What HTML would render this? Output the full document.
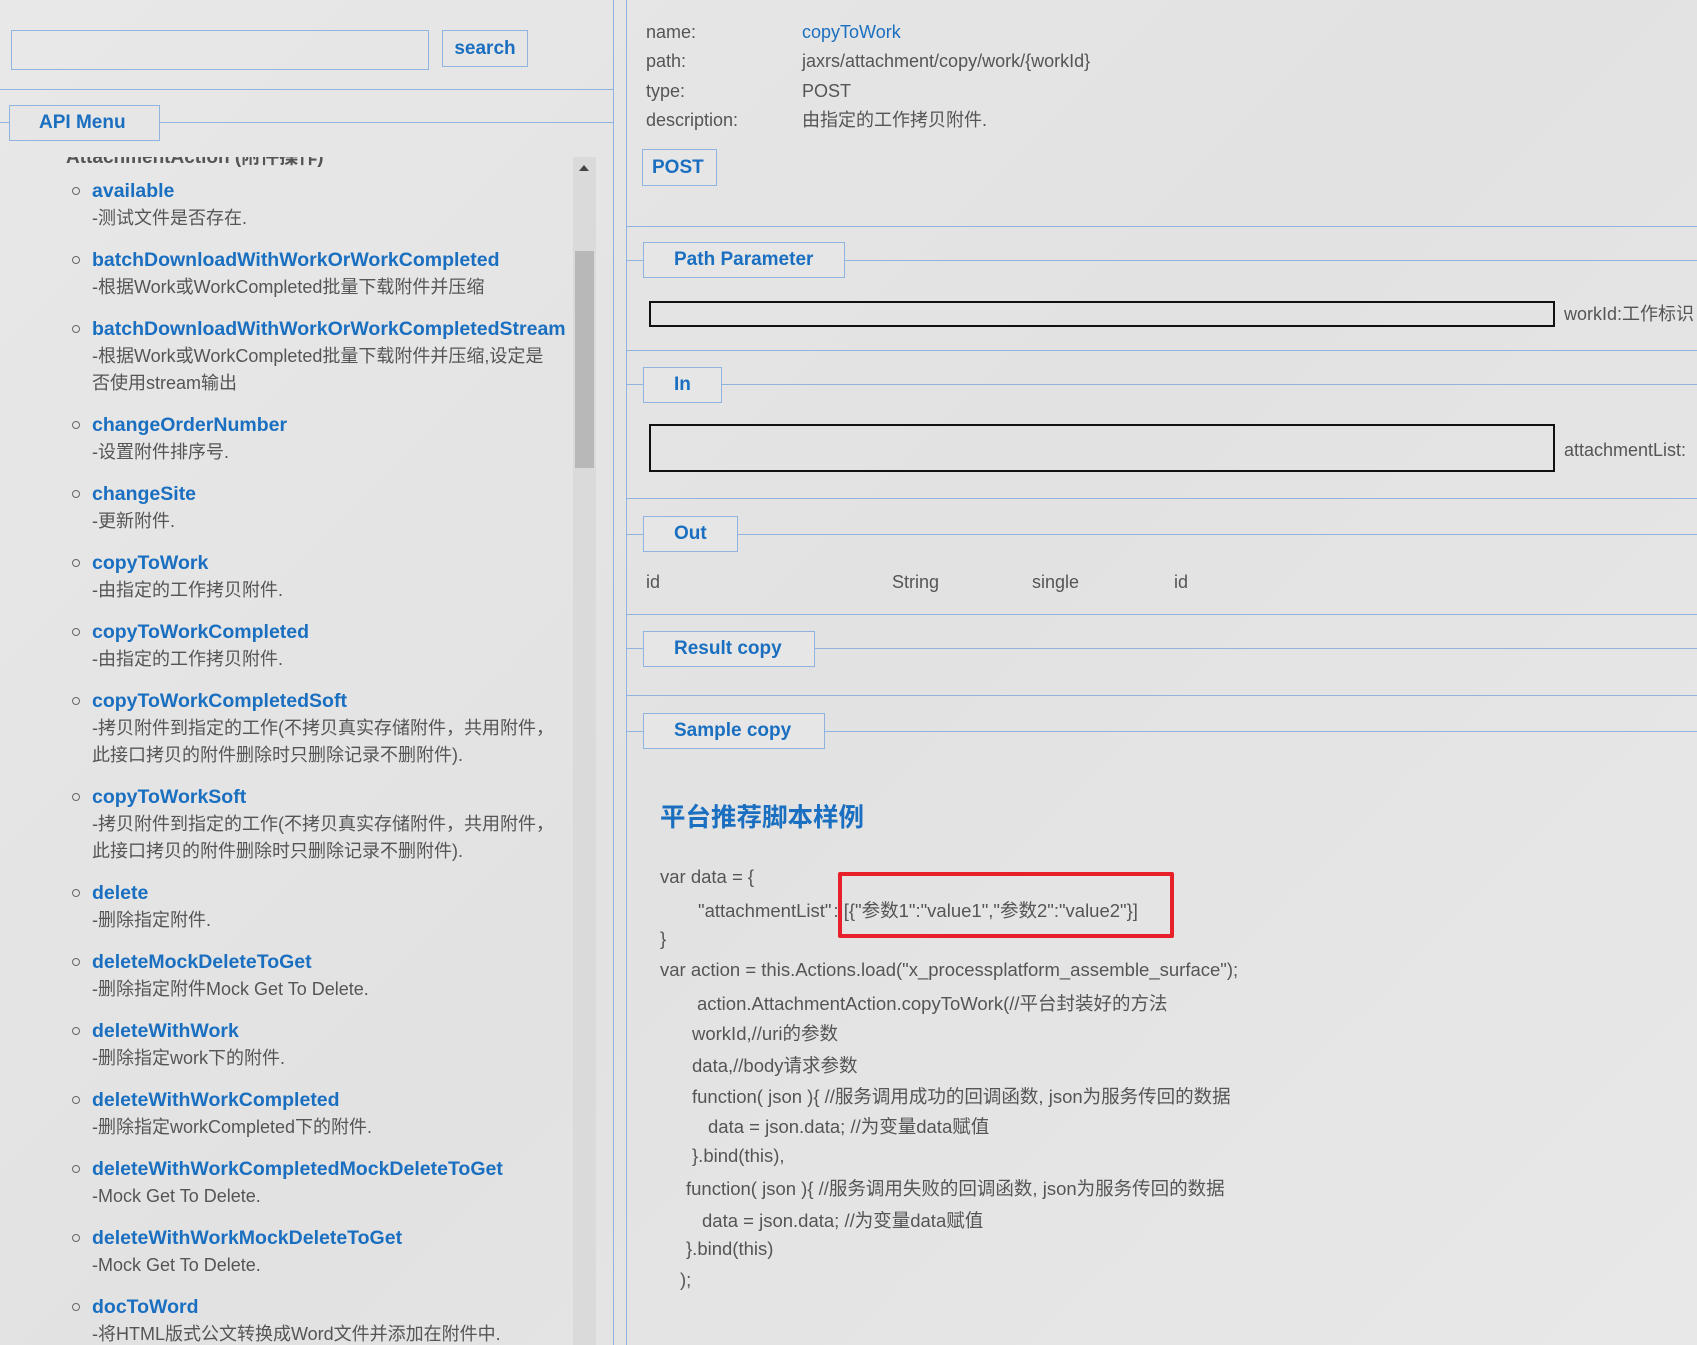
<!DOCTYPE html>
<html><head><meta charset="utf-8">
<style>
*{margin:0;padding:0;box-sizing:border-box}
body{width:1697px;height:1345px;overflow:hidden;background:linear-gradient(135deg,#e8e8e8,#e2e2e2 50%,#e8e8e8);font-family:"Liberation Sans","Noto Sans CJK SC",sans-serif;color:#555;position:relative}
.a{position:absolute}
.bl{border:1px solid #8fb4e0}
.lg{position:absolute;background:#e6e6e6;border:1px solid #8fb4e0;color:#1a6fc0;font-weight:bold;font-size:19px;padding-left:30px;line-height:33px}
.hl{position:absolute;height:1px;background:#8fb4e0}
.vl{position:absolute;width:1px;background:#8fb4e0}
ul{list-style:none}
li{position:relative;padding-left:92px;margin-bottom:15px}
li:before{content:"";position:absolute;left:72px;top:9px;width:6px;height:6px;border:1px solid #666;border-radius:50%}
li b{display:block;color:#1a6fc0;font-size:19.5px;line-height:27px}
li span{display:block;font-size:18px;line-height:27px;color:#555}
.code div{position:absolute;font-size:18.5px;white-space:nowrap;color:#555}
.lab{font-size:18px}
</style></head><body>
<!-- left -->
<div class="a bl" style="left:11px;top:30px;width:418px;height:40px"></div>
<div class="a bl" style="left:442px;top:30px;width:86px;height:37px;color:#1a6fc0;font-weight:bold;font-size:19px;text-align:center;line-height:35px">search</div>
<div class="hl" style="left:0;top:89px;width:613px"></div>
<div class="vl" style="left:613px;top:0;height:1345px"></div>
<div class="hl" style="left:0;top:122px;width:613px"></div>
<div class="lg" style="left:9px;top:105px;width:151px;height:36px;padding-left:29px">API Menu</div>
<div class="a" style="left:0;top:157px;width:573px;height:1188px;overflow:hidden">
<div style="position:absolute;left:66px;top:-15px;font-size:19px;font-weight:bold;color:#555">AttachmentAction (附件操作)</div>
<ul style="position:absolute;top:21px;left:0;width:573px">
<li><b>available</b><span>-测试文件是否存在.</span></li>
<li><b>batchDownloadWithWorkOrWorkCompleted</b><span>-根据Work或WorkCompleted批量下载附件并压缩</span></li>
<li><b>batchDownloadWithWorkOrWorkCompletedStream</b><span>-根据Work或WorkCompleted批量下载附件并压缩,设定是<br>否使用stream输出</span></li>
<li><b>changeOrderNumber</b><span>-设置附件排序号.</span></li>
<li><b>changeSite</b><span>-更新附件.</span></li>
<li><b>copyToWork</b><span>-由指定的工作拷贝附件.</span></li>
<li><b>copyToWorkCompleted</b><span>-由指定的工作拷贝附件.</span></li>
<li><b>copyToWorkCompletedSoft</b><span>-拷贝附件到指定的工作(不拷贝真实存储附件，共用附件，<br>此接口拷贝的附件删除时只删除记录不删附件).</span></li>
<li><b>copyToWorkSoft</b><span>-拷贝附件到指定的工作(不拷贝真实存储附件，共用附件，<br>此接口拷贝的附件删除时只删除记录不删附件).</span></li>
<li><b>delete</b><span>-删除指定附件.</span></li>
<li><b>deleteMockDeleteToGet</b><span>-删除指定附件Mock Get To Delete.</span></li>
<li><b>deleteWithWork</b><span>-删除指定work下的附件.</span></li>
<li><b>deleteWithWorkCompleted</b><span>-删除指定workCompleted下的附件.</span></li>
<li><b>deleteWithWorkCompletedMockDeleteToGet</b><span>-Mock Get To Delete.</span></li>
<li><b>deleteWithWorkMockDeleteToGet</b><span>-Mock Get To Delete.</span></li>
<li><b>docToWord</b><span>-将HTML版式公文转换成Word文件并添加在附件中.</span></li>
</ul>
</div>
<div class="a" style="left:573px;top:157px;width:23px;height:1188px;background:#dadada"></div>
<div class="a" style="left:575px;top:251px;width:19px;height:217px;background:#b8b8b8"></div>
<div class="a" style="left:579px;top:165px;width:0;height:0;border-left:5px solid transparent;border-right:5px solid transparent;border-bottom:6px solid #444"></div>

<!-- right -->
<div class="vl" style="left:626px;top:0;height:1345px"></div>
<div class="hl" style="left:626px;top:226px;width:1071px"></div>
<div class="a lab" style="left:646px;top:18px;line-height:29.3px">name:<br>path:<br>type:<br>description:</div>
<div class="a lab" style="left:802px;top:18px;line-height:29.3px"><span style="color:#1a6fc0">copyToWork</span><br>jaxrs/attachment/copy/work/{workId}<br>POST<br>由指定的工作拷贝附件.</div>
<div class="lg" style="left:642px;top:149px;width:75px;height:37px;padding-left:9px;line-height:35px">POST</div>

<div class="hl" style="left:626px;top:260px;width:1071px"></div>
<div class="lg" style="left:643px;top:242px;width:202px;height:36px">Path Parameter</div>
<div class="a" style="left:649px;top:301px;width:906px;height:26px;border:2px solid #111"></div>
<div class="a lab" style="left:1564px;top:301px;line-height:26px;white-space:nowrap">workId:工作标识</div>
<div class="hl" style="left:626px;top:350px;width:1071px"></div>

<div class="hl" style="left:626px;top:384px;width:1071px"></div>
<div class="lg" style="left:643px;top:367px;width:79px;height:36px">In</div>
<div class="a" style="left:649px;top:424px;width:906px;height:48px;border:2px solid #111"></div>
<div class="a lab" style="left:1564px;top:437px;line-height:26px;white-space:nowrap">attachmentList:</div>
<div class="hl" style="left:626px;top:498px;width:1071px"></div>

<div class="hl" style="left:626px;top:534px;width:1071px"></div>
<div class="lg" style="left:643px;top:516px;width:95px;height:36px">Out</div>
<div class="a lab" style="left:646px;top:572px">id</div>
<div class="a lab" style="left:892px;top:572px">String</div>
<div class="a lab" style="left:1032px;top:572px">single</div>
<div class="a lab" style="left:1174px;top:572px">id</div>
<div class="hl" style="left:626px;top:614px;width:1071px"></div>

<div class="hl" style="left:626px;top:648px;width:1071px"></div>
<div class="lg" style="left:643px;top:631px;width:172px;height:36px">Result copy</div>
<div class="hl" style="left:626px;top:695px;width:1071px"></div>

<div class="hl" style="left:626px;top:731px;width:1071px"></div>
<div class="lg" style="left:643px;top:713px;width:182px;height:36px">Sample copy</div>

<div class="a" style="left:660px;top:797px;font-size:25.5px;font-weight:bold;color:#1a6fc0">平台推荐脚本样例</div>
<div class="code">
<div style="left:660px;top:866px">var data = {</div>
<div style="left:698px;top:897px">"attachmentList"<span style="margin-left:2px"></span>: [{"参数1":"value1","参数2":"value2"}]</div>
<div style="left:660px;top:928px">}</div>
<div style="left:660px;top:959px">var action = this.Actions.load("x_processplatform_assemble_surface");</div>
<div style="left:697px;top:990px">action.AttachmentAction.copyToWork(//平台封装好的方法</div>
<div style="left:692px;top:1020px">workId,//uri的参数</div>
<div style="left:692px;top:1052px">data,//body请求参数</div>
<div style="left:692px;top:1083px">function( json ){ //服务调用成功的回调函数, json为服务传回的数据</div>
<div style="left:708px;top:1113px">data = json.data; //为变量data赋值</div>
<div style="left:692px;top:1145px">}.bind(this),</div>
<div style="left:686px;top:1175px">function( json ){ //服务调用失败的回调函数, json为服务传回的数据</div>
<div style="left:702px;top:1207px">data = json.data; //为变量data赋值</div>
<div style="left:686px;top:1238px">}.bind(this)</div>
<div style="left:680px;top:1269px">);</div>
</div>
<div class="a" style="left:838px;top:872px;width:336px;height:66px;border:4px solid #e8202a;border-radius:2px"></div>
</body></html>
